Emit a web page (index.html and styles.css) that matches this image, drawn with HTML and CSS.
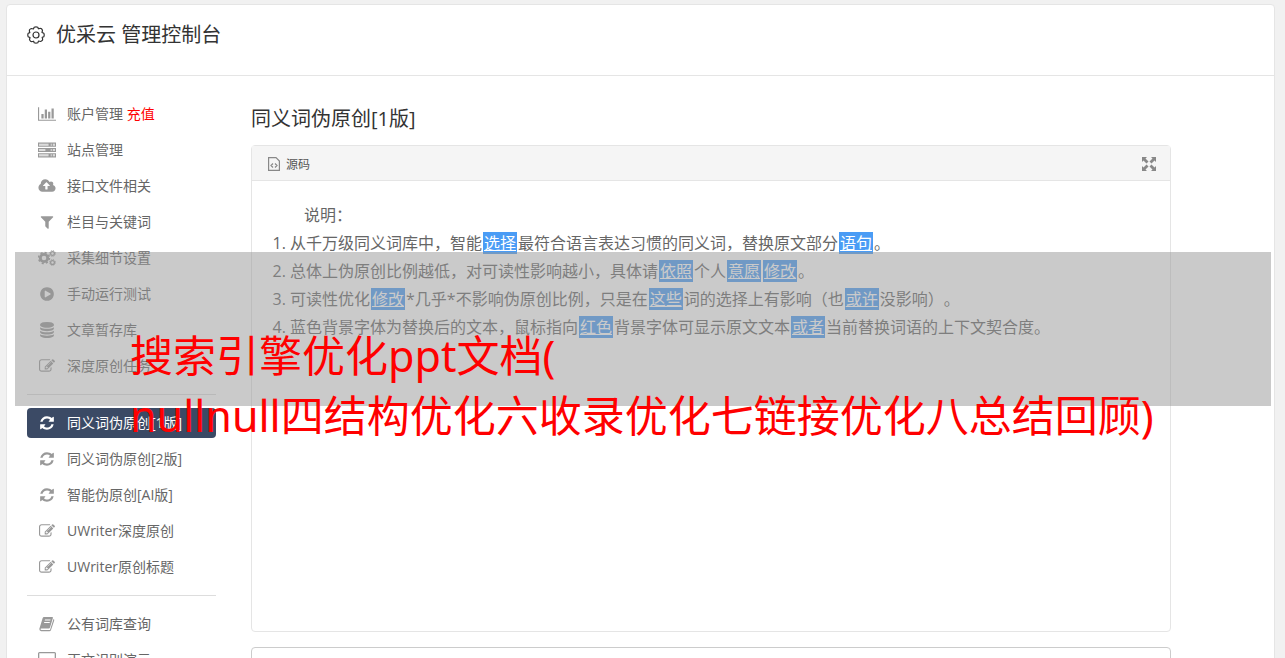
FILE: index.html
```html
<!DOCTYPE html>
<html lang="zh-CN">
<head>
    <meta charset="UTF-8">
    <meta name="viewport" content="width=device-width, initial-scale=1.0">
    <title>优采云 管理控制台</title>
    <link rel="stylesheet" href="styles.css">
</head>
<body>
    <!-- 图标 -->
    <svg class="sprite" aria-hidden="true">
        <symbol id="i-chart" viewBox="0 0 2048 1792"><path d="M640 896v512h-256v-512h256zm384-512v1024h-256v-1024h256zm1024 1152v128h-2048v-1536h128v1408h1920zm-640-896v768h-256v-768h256zm384-384v1152h-256v-1152h256z"/></symbol>
        <symbol id="i-server" viewBox="0 0 17 14"><path opacity=".35" d="M1 1h15v2H1zM1 6h15v2H1zM1 11h15v2H1z"/><path fill-rule="evenodd" d="M0 0h17v4H0zM1 1v2h9V1zM12 1v2h1V1zM14 1v2h2V1zM0 5h17v4H0zM1 6v2h6V6zM12 6v2h1V6zM14 6v2h2V6zM0 10h17v4H0zM1 11v2h9v-2zM12 11v2h1v-2zM14 11v2h2v-2z"/></symbol>
        <symbol id="i-cloud" viewBox="0 0 1920 1792"><path d="M1280 864q0-14-9-23l-352-352q-9-9-23-9t-23 9l-351 351q-10 12-10 24 0 14 9 23t23 9h224v352q0 13 9.500 22.500t22.500 9.500h192q13 0 22.500-9.500t9.500-22.500v-352h224q13 0 22.500-9.500t9.500-22.500zm640 288q0 159-112.500 271.500t-271.500 112.500h-1088q-185 0-316.500-131.500t-131.500-316.500q0-130 70-240t188-165q-2-30-2-43 0-212 150-362t362-150q156 0 285.500 87t188.500 231q71-62 166-62 106 0 181 75t75 181q0 76-41 138 130 31 213.500 135.500t83.500 238.500z"/></symbol>
        <symbol id="i-filter" viewBox="0 0 1408 1792"><path d="M1403 295q17 41-14 70l-493 493v742q0 42-39 59-13 5-25 5-27 0-45-19l-256-256q-19-19-19-45v-486l-493-493q-31-29-14-70 17-39 59-39h1280q42 0 59 39z"/></symbol>
        <symbol id="i-cogs" viewBox="0 0 18 16"><g fill="none" stroke="currentColor"><circle cx="6" cy="8" r="3.700" stroke-width="2.800"/><circle cx="6" cy="8" r="5.400" stroke-width="1.600" stroke-dasharray="2.120 2.120"/><circle cx="14.500" cy="3.500" r="1.900" stroke-width="1.300"/><circle cx="14.500" cy="3.500" r="2.900" stroke-width="1" stroke-dasharray="1.140 1.140"/><circle cx="14.500" cy="12.500" r="1.900" stroke-width="1.300"/><circle cx="14.500" cy="12.500" r="2.900" stroke-width="1" stroke-dasharray="1.140 1.140"/></g></symbol>
        <symbol id="i-play" viewBox="0 0 1536 1792"><path d="M768 128q209 0 385.500 103t279.500 279.500 103 385.500-103 385.500-279.500 279.500-385.500 103-385.500-103-279.500-279.500-103-385.500 103-385.500 279.500-279.500 385.500-103zm384 823q32-18 32-55t-32-55l-544-320q-31-19-64-1-32 19-32 56v640q0 37 32 56 16 8 32 8 17 0 32-9z"/></symbol>
        <symbol id="i-database" viewBox="0 0 1536 1792"><path d="M768 768q237 0 443-43t325-127v170q0 69-103 128t-280 93.500-385 34.500-385-34.500-280-93.500-103-128v-170q119 84 325 127t443 43zm0 768q237 0 443-43t325-127v170q0 69-103 128t-280 93.500-385 34.500-385-34.500-280-93.500-103-128v-170q119 84 325 127t443 43zm0-384q237 0 443-43t325-127v170q0 69-103 128t-280 93.500-385 34.500-385-34.500-280-93.500-103-128v-170q119 84 325 127t443 43zm0-1152q208 0 385 34.500t280 93.500 103 128v128q0 69-103 128t-280 93.500-385 34.500-385-34.500-280-93.500-103-128v-128q0-69 103-128t280-93.500 385-34.500z"/></symbol>
        <symbol id="i-edit" viewBox="0 0 1792 1792"><path d="M888 1184l116-116-152-152-116 116v56h96v96h56zm440-720q-16-16-33 1l-350 350q-17 17-1 33t33-1l350-350q17-17 1-33zm80 594v190q0 119-84.500 203.500t-203.500 84.500h-832q-119 0-203.500-84.500t-84.500-203.500v-832q0-119 84.500-203.500t203.500-84.500h832q63 0 117 25 15 7 18 23 3 17-9 29l-49 49q-14 14-32 8-23-6-45-6h-832q-66 0-113 47t-47 113v832q0 66 47 113t113 47h832q66 0 113-47t47-113v-126q0-13 9-22l64-64q15-15 35-7t20 29zm-96-738l288 288-672 672h-288v-288zm444 132l-92 92-288-288 92-92q28-28 68-28t68 28l152 152q28 28 28 68t-28 68z"/></symbol>
        <symbol id="i-refresh" viewBox="0 0 1536 1792"><path d="M1511 1056q0 5-1 7-64 268-268 434.500t-478 166.500q-146 0-282.500-55t-243.500-157l-129 129q-19 19-45 19t-45-19-19-45v-448q0-26 19-45t45-19h448q26 0 45 19t19 45-19 45l-137 137q71 66 161 102t187 36q134 0 250-65t186-179q11-17 53-117 8-23 30-23h192q13 0 22.500 9.500t9.500 22.500zm25-800v448q0 26-19 45t-45 19h-448q-26 0-45-19t-19-45 19-45l138-138q-148-137-349-137-134 0-250 65t-186 179q-11 17-53 117-8 23-30 23h-199q-13 0-22.500-9.500t-9.500-22.500v-7q65-268 270-434.500t480-166.500q146 0 284 55.500t245 156.500l130-129q19-19 45-19t45 19 19 45z"/></symbol>
        <symbol id="i-book" viewBox="0 0 16 16"><path fill-rule="evenodd" d="M5 1h8.200q1 0 .7 1L11 11.500q-.3 1-1.300 1H2.200q-.8 0-.7.700.2.800 1 .8H11L14.500 3q1 .4.700 1.400L12 14q-.4 1.200-1.600 1.200H2.200Q.4 15 .3 13L3.600 2.200Q4 1 5 1zM6 3.500l-.3 1h5.600l.3-1zM5.300 6 5 7h5.600l.3-1z"/></symbol>
        <symbol id="i-desktop" viewBox="0 0 18 16"><path fill-rule="evenodd" d="M1.500 0h15Q18 0 18 1.500v10q0 1.500-1.500 1.500H11v2h1v1H6v-1h1v-2H1.500Q0 13 0 11.500v-10Q0 0 1.500 0zM1.300 1.300v9h15.400v-9z"/></symbol>
        <symbol id="i-gear" viewBox="0 0 18 18"><g fill="none" stroke="currentColor" stroke-width="1.200"><circle cx="9" cy="9" r="3"/><path stroke-linejoin="round" d="M7.200 1.200Q9 .4 10.800 1.200L11.400 2.800Q12.800 2.200 14.100 2.500 15.300 3.400 15.500 4.500L15 6.400 16.800 7.200Q17.600 9 16.800 10.800L15.200 11.400Q15.800 12.800 15.500 14.100 14.600 15.300 13.500 15.500L11.600 15 10.800 16.800Q9 17.600 7.200 16.800L6.600 15.200Q5.200 15.800 3.900 15.500 2.700 14.600 2.500 13.500L3 11.600 1.200 10.800Q.4 9 1.200 7.200L2.800 6.600Q2.200 5.200 2.500 3.900 3.400 2.700 4.500 2.500L6.400 3z"/></g></symbol>
        <symbol id="i-source" viewBox="0 0 12 14"><path fill="none" stroke="currentColor" d="M.6.600h7.400l3.400 3.400v9.400H.6zM5 6.500 3 8.500l2 2M7 6.500l2 2-2 2" stroke-width="1.200"/></symbol>
        <symbol id="i-expand" viewBox="0 0 14 14"><path d="M0 0h5L3.500 1.500l3 3-2 2-3-3L0 5zM14 0v5l-1.500-1.500-3 3-2-2 3-3L9 0zM0 14V9l1.500 1.500 3-3 2 2-3 3L5 14zM14 14H9l1.500-1.500-3-3 2-2 3 3L14 9z"/></symbol>
    </svg>

    <div class="wrapper">
        <header class="header">
            <svg class="header-icon"><use href="#i-gear"/></svg>
            <h1>优采云 管理控制台</h1>
        </header>

        <div class="content">
            <nav class="sidebar">
                <a class="item" href="#"><svg class="icon"><use href="#i-chart"/></svg><span>账户管理 <span class="recharge">充值</span></span></a>
                <a class="item" href="#"><svg class="icon"><use href="#i-server"/></svg><span>站点管理</span></a>
                <a class="item" href="#"><svg class="icon"><use href="#i-cloud"/></svg><span>接口文件相关</span></a>
                <a class="item" href="#"><svg class="icon"><use href="#i-filter"/></svg><span>栏目与关键词</span></a>
                <a class="item" href="#"><svg class="icon"><use href="#i-cogs"/></svg><span>采集细节设置</span></a>
                <a class="item" href="#"><svg class="icon"><use href="#i-play"/></svg><span>手动运行测试</span></a>
                <a class="item" href="#"><svg class="icon"><use href="#i-database"/></svg><span>文章暂存库</span></a>
                <a class="item" href="#"><svg class="icon"><use href="#i-edit"/></svg><span>深度原创任务</span></a>
                <hr>
                <a class="item active" href="#"><svg class="icon"><use href="#i-refresh"/></svg><span>同义词伪原创[1版]</span></a>
                <a class="item" href="#"><svg class="icon"><use href="#i-refresh"/></svg><span>同义词伪原创[2版]</span></a>
                <a class="item" href="#"><svg class="icon"><use href="#i-refresh"/></svg><span>智能伪原创[AI版]</span></a>
                <a class="item" href="#"><svg class="icon"><use href="#i-edit"/></svg><span>UWriter深度原创</span></a>
                <a class="item" href="#"><svg class="icon"><use href="#i-edit"/></svg><span>UWriter原创标题</span></a>
                <hr>
                <a class="item" href="#"><svg class="icon"><use href="#i-book"/></svg><span>公有词库查询</span></a>
                <a class="item" href="#"><svg class="icon"><use href="#i-desktop"/></svg><span>正文识别演示</span></a>
            </nav>

            <main class="main">
                <h2>同义词伪原创[1版]</h2>
                <section class="editor">
                    <div class="toolbar">
                        <button class="tool" type="button"><svg class="source-icon"><use href="#i-source"/></svg>源码</button>
                        <button class="tool" type="button" aria-label="全屏"><svg class="expand-icon"><use href="#i-expand"/></svg></button>
                    </div>
                    <div class="editor-body">
                        <p>说明：</p>
                        <ol>
                            <li>从千万级同义词库中，智能<a href="#">选择</a>最符合语言表达习惯的同义词，替换原文部分<a href="#">语句</a>。</li>
                            <li>总体上伪原创比例越低，对可读性影响越小，具体请<a href="#">依照</a>个人<a href="#">意愿</a><a href="#">修改</a>。</li>
                            <li>可读性优化<a href="#">修改</a>*几乎*不影响伪原创比例，只是在<a href="#">这些</a>词的选择上有影响（也<a href="#">或许</a>没影响）。</li>
                            <li>蓝色背景字体为替换后的文本，鼠标指向<a href="#">红色</a>背景字体可显示原文文本<a href="#">或者</a>当前替换词语的上下文契合度。</li>
                        </ol>
                    </div>
                </section>
                <section class="result"></section>
            </main>
        </div>
    </div>

    <div class="banner">
        <p>搜索引擎优化ppt文档(<br>nullnull四结构优化六收录优化七链接优化八总结回顾)</p>
    </div>
</body>
</html>
```
FILE: styles.css
```css
* {
    box-sizing: border-box;
}

body {
    position: relative;
    height: 100vh;
    margin: 0;
    padding: 4px 10px 0 6px;
    overflow: hidden;
    background-color: #f1f1f1;
    color: #666;
    font-family: "Open Sans", "Noto Sans CJK SC", sans-serif;
    font-size: 14px;
    text-spacing-trim: space-all;
}

h1, h2, p, ol {
    margin: 0;
    font-weight: inherit;
}

a {
    color: inherit;
    text-decoration: none;
}

svg {
    flex: none;
    fill: currentColor;
}

.sprite {
    position: absolute;
    width: 0;
    height: 0;
}

.wrapper {
    background-color: #fff;
    border: 1px solid #e5e5e5;
    border-radius: 4px;
}

.header {
    display: flex;
    align-items: center;
    gap: 11px;
    height: 71px;
    padding: 0 20px 11px;
    border-bottom: 1px solid #e5e5e5;
    color: #333;
}

.header h1 {
    font-size: 20px;
    line-height: 28px;
}

.header-icon {
    width: 18px;
    height: 18px;
}

.content {
    display: flex;
    gap: 35px;
    padding: 23px 103px 20px 20px;
}

.sidebar {
    display: flex;
    flex: 0 0 189px;
    flex-direction: column;
    gap: 6px;
}

.sidebar hr {
    width: 100%;
    height: 1px;
    margin: 7px 0;
    border: none;
    background-color: #ddd;
}

.item {
    display: flex;
    align-items: center;
    gap: 11px;
    height: 30px;
    padding-left: 11px;
    border-radius: 4px;
}

.item > span {
    padding-bottom: 2px;
}

.item.active {
    background-color: #3b4a65;
    color: #fff;
}

.icon {
    width: 18px;
    height: 16px;
    color: #999;
}

.active .icon {
    color: #fff;
}

.recharge {
    color: #f00;
}

.main {
    flex: 1;
    min-width: 0;
}

.main h2 {
    height: 46px;
    color: #333;
    font-size: 20px;
    line-height: 40px;
}

.editor {
    min-height: 487px;
    border: 1px solid #e5e5e5;
    border-radius: 4px;
}

.toolbar {
    display: flex;
    align-items: center;
    justify-content: space-between;
    height: 35px;
    padding: 2px 14px 0 16px;
    background-color: #f5f5f5;
    border-bottom: 1px solid #e5e5e5;
}

.tool {
    display: flex;
    align-items: center;
    gap: 6px;
    padding: 0;
    border: none;
    background: none;
    color: #555;
    font: inherit;
    font-size: 12px;
    cursor: pointer;
}

.source-icon {
    width: 12px;
    height: 14px;
    color: #888;
}

.expand-icon {
    width: 14px;
    height: 14px;
    color: #888;
}

.editor-body {
    padding: 20px;
    font-size: 16px;
    line-height: 28px;
}

.editor-body p {
    text-indent: 32px;
}

.editor-body ol {
    padding-left: 18px;
}

.editor-body li a {
    margin: 0 1px;
    padding: 0 1px;
    background-color: #4a9cf5;
    color: #fff;
    text-decoration: underline;
}

.result {
    height: 200px;
    margin-top: 15px;
    border: 1px solid #ccc;
    border-radius: 4px;
}

.banner {
    position: absolute;
    top: 252px;
    right: 14px;
    left: 15px;
    height: 154px;
    padding: 74px 0 0 115px;
    background-color: rgba(150, 150, 150, 0.5);
    color: #f00;
    font-family: "Noto Sans", "Noto Sans CJK SC", sans-serif;
    font-size: 43px;
    line-height: 60px;
    white-space: nowrap;
}
```
